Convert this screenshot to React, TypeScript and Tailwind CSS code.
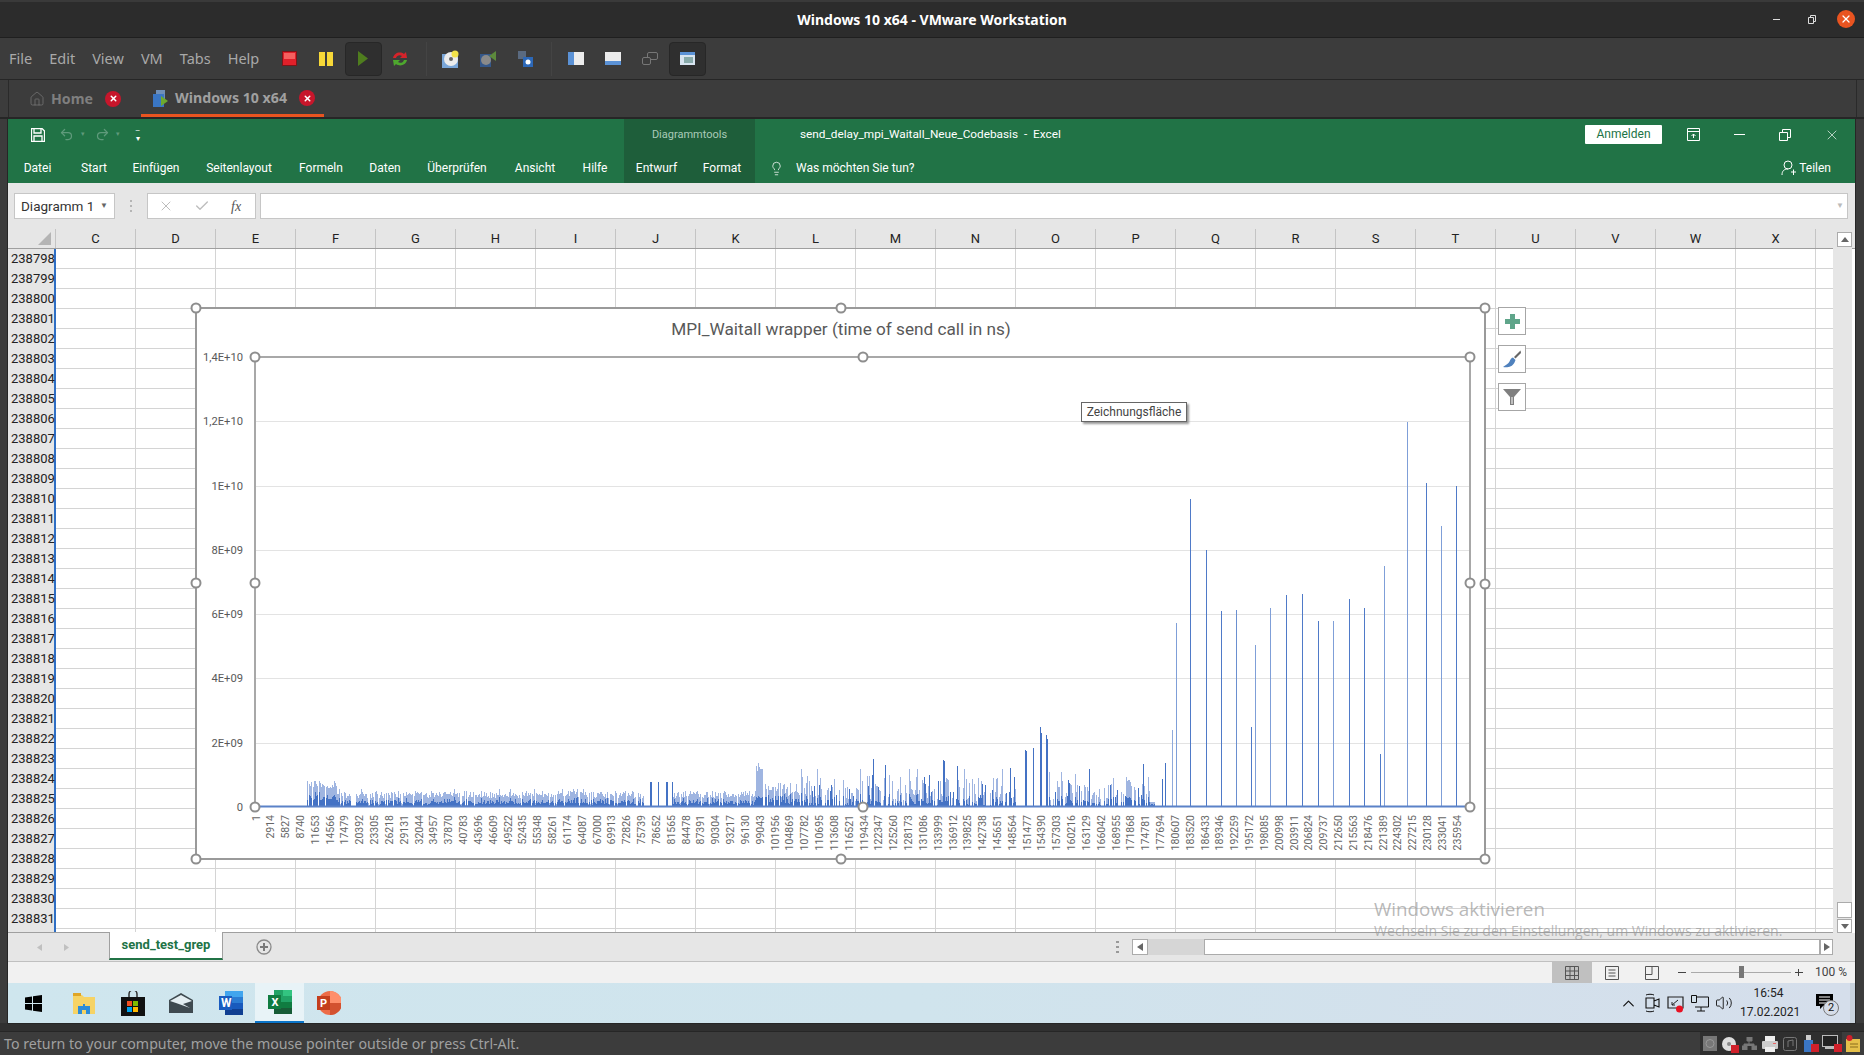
import React from "react";
import { House, Undo2, Redo2, Lightbulb, ChevronUp, Volume2, X, Check } from "lucide-react";

const COLS = "C D E F G H I J K L M N O P Q R S T U V W X".split(" ");
const ROWS = Array.from({ length: 34 }, (_, i) => 238798 + i);
const RIBBON: [string, string][] = [
  ["Datei", "w-[59px]"], ["Start", "w-[54px]"], ["Einfügen", "w-[70px]"], ["Seitenlayout", "w-[96px]"],
  ["Formeln", "w-[68px]"], ["Daten", "w-[60px]"], ["Überprüfen", "w-[84px]"], ["Ansicht", "w-[72px]"], ["Hilfe", "w-[53px] pr-[5px]"],
];

function makeBars() {
  let seed = 12345;
  const r = () => { seed = (seed * 16807) % 2147483647; return seed / 2147483647; };
  let light = ""; let dark = "";
  const add = (x: number, h: number, d: number) => {
    const X = x + 0.5;
    light += `M${X} 807V${(807 - h).toFixed(0)}`;
    if (d > 0) dark += `M${X} 807V${(807 - h * d).toFixed(0)}`;
  };
  for (let x = 307; x < 1172; x++) {
    let h = 0; let d = 0.25 + r() * 0.35;
    if (x < 337) { h = 18 + r() * 9; if (r() < 0.08) h = 0; }
    else if (x < 644) { h = 9 + r() * 7; if (r() < 0.03) h = 18; if (r() < 0.14) h = r() * 4; if (x > 350 && x < 356) h = 0; }
    else if (x < 673) { if ([650, 651, 658, 666, 667, 672].includes(x)) { h = 25; d = 1; } }
    else if (x < 756) { h = 9 + r() * 7; if (r() < 0.14) h = r() * 4; }
    else if (x < 763) { h = 36 + r() * 8; d = 0.25; }
    else if (x < 800) { h = 10 + r() * 18; if (r() < 0.22) h = 0; }
    else if (x < 1016) { h = r() < 0.35 ? 0 : 6 + r() * 26; if (r() < 0.2) d = 1; else d = 0.15 + r() * 0.3; if (r() < 0.04) h = 38; }
    else if (x < 1048) h = 0;
    else if (x < 1092) { h = r() < 0.35 ? 0 : 6 + r() * 30; d = r() < 0.2 ? 1 : 0.3; }
    else if (x < 1106) { h = r() < 0.3 ? 0 : 5 + r() * 16; d = 0.3; }
    else if (x < 1150) { h = r() < 0.35 ? 0 : 8 + r() * 22; d = r() < 0.2 ? 1 : 0.35; }
    else if (x < 1155) { h = 5; }
    if (h > 0) add(x, h, d);
  }
  ([[873, 48], [885, 42], [943, 47], [944, 46], [957, 41], [1010, 39], [1025, 57], [1026, 56], [1033, 59], [1040, 80], [1041, 74], [1046, 72], [1047, 68], [1089, 38], [1143, 43], [1165, 44], [1162, 28]] as number[][]).forEach(([x, h]) => add(x, h, 1));
  return { light, dark };
}
const BARS = makeBars();
const SPIKES: [number, number, string][] = [
  [1172, 2.4, "#8faadc"], [1176, 5.75, "#7f9fd8"], [1190, 9.6, "#4f7ac8"], [1206, 8, "#4f7ac8"], [1221, 6.1, "#4f7ac8"],
  [1236, 6.15, "#6a8fd0"], [1251, 2.5, "#4f7ac8"], [1255, 5.05, "#7f9fd8"], [1270, 6.2, "#7f9fd8"], [1286, 6.6, "#4f7ac8"],
  [1302, 6.65, "#4f7ac8"], [1318, 5.8, "#4f7ac8"], [1333, 5.8, "#7f9fd8"], [1349, 6.5, "#4f7ac8"], [1364, 6.2, "#4f7ac8"],
  [1380, 1.65, "#4f7ac8"], [1384, 7.5, "#7f9fd8"], [1407, 12, "#7f9fd8"], [1426, 10.1, "#4f7ac8"], [1441, 8.75, "#7f9fd8"], [1456, 10, "#4f7ac8"],
];
const YLAB: [string, number][] = [["1,4E+10", 357], ["1,2E+10", 421], ["1E+10", 486], ["8E+09", 550], ["6E+09", 614], ["4E+09", 678], ["2E+09", 743], ["0", 807]];
const HANDLES = [[196, 308], [841, 308], [1485, 308], [196, 583], [1485, 584], [196, 859], [841, 859], [1485, 859], [255, 357], [863, 357], [1470, 357], [255, 583], [1470, 583], [255, 807], [863, 807], [1470, 807]];

function Chart() {
  const labels = Array.from({ length: 82 }, (_, k) => 1 + 2913 * k);
  return (
    <svg viewBox="196 308 1289 551" className="absolute left-[188px] top-[79px] w-[1289px] h-[551px] overflow-visible">
      <rect x="196" y="308" width="1289" height="551" fill="#fff" stroke="#9a9a9a" strokeWidth="2" />
      <text x="841" y="335" textAnchor="middle" fontSize="17.2" fill="#595959">MPI_Waitall wrapper (time of send call in ns)</text>
      {YLAB.map(([t, y]) => (
        <g key={t}>
          {y > 357 && y < 807 && <line x1="255" x2="1470" y1={y + 0.5} y2={y + 0.5} stroke="#e3e3e3" />}
          <text x="243" y={y + 4} textAnchor="end" fontSize="11.2" fill="#595959">{t}</text>
        </g>
      ))}
      <path d={BARS.light} stroke="#9fb5e1" strokeWidth="1" shapeRendering="crispEdges" />
      <path d={BARS.dark} stroke="#4472c4" strokeWidth="1" shapeRendering="crispEdges" />
      {SPIKES.map(([x, v, c]) => (
        <line key={x} x1={x + 0.5} x2={x + 0.5} y1="807" y2={807 - v * 32.07} stroke={c} shapeRendering="crispEdges" />
      ))}
      <line x1="255" x2="1470" y1="806.5" y2="806.5" stroke="#5b82c8" strokeWidth="2" />
      <path d="M255 357H1470V807M255 357V807" fill="none" stroke="#a8a8a8" strokeWidth="2" />
      {labels.map((v, k) => (
        <text key={v} transform={`translate(${259.5 + k * 14.83} 815) rotate(-90)`} textAnchor="end" fontSize="10.5" fill="#666">{v}</text>
      ))}
      {HANDLES.map(([x, y], i) => (
        <circle key={i} cx={x} cy={y} r="4.5" fill="#fff" stroke="#8e8e8e" strokeWidth="2" />
      ))}
    </svg>
  );
}

function Sheet() {
  return (
    <div className="relative flex-1 overflow-hidden bg-white">
      <div className="flex h-[20px] bg-[#e6e6e6] border-b border-[#9f9f9f]">
        <div className="w-[48px] shrink-0 flex items-end justify-end pr-[4px] pb-[3px] border-r border-[#c4c4c4]">
          <svg width="13" height="13" viewBox="0 0 13 13"><path d="M13 0V13H0Z" fill="#b4b4b4" /></svg>
        </div>
        {COLS.map((c) => (
          <div key={c} className="w-[80px] shrink-0 text-center text-[13px] leading-[19px] text-[#222] border-r border-[#c4c4c4]">{c}</div>
        ))}
      </div>
      {ROWS.concat(238832).map((n) => (
        <div key={n} className="flex h-[20px]">
          <div className={"w-[48px] shrink-0 bg-[#e6e6e6] border-r-2 border-[#2f6fc4] text-[13px] leading-[20px] pl-[3px] text-[#222]"}>{n === 238832 ? "" : n}</div>
          {COLS.map((c) => (
            <div key={c} className="w-[80px] shrink-0 border-r border-b border-[#d4d4d4]" />
          ))}
          <div className="w-[17px] shrink-0 border-b border-[#d4d4d4]" />
        </div>
      ))}
      {/* scrollbar */}
      <div className="absolute right-[3px] top-0 bottom-0 w-[19px] bg-[#e6e6e6] flex flex-col items-end pt-[3px]">
        <div className="w-[15px] h-[15px] bg-white border border-[#ababab] flex items-center justify-center">
          <svg width="8" height="5"><path d="M4 0L8 5H0Z" fill="#666" /></svg>
        </div>
        <div className="mt-auto w-[15px] h-[16px] bg-white border border-[#ababab]" />
        <div className="w-[15px] h-[14px] mt-[1px] bg-white border border-[#ababab] flex items-center justify-center">
          <svg width="8" height="5"><path d="M0 0H8L4 5Z" fill="#666" /></svg>
        </div>
      </div>
      <div className="absolute left-0 right-[22px] bottom-0 h-[1px] bg-[#9f9f9f]" />
      <Chart />
      {/* chart buttons */}
      <div className="absolute left-[1490px] top-[78px] flex flex-col gap-[10px]">
        <div className="w-[28px] h-[28px] bg-white border border-[#a6a6a6] flex items-center justify-center">
          <svg width="15" height="15" viewBox="0 0 15 15"><path d="M5 0H10V5H15V10H10V15H5V10H0V5H5Z" fill="#5fa58a" /></svg>
        </div>
        <div className="w-[28px] h-[28px] bg-white border border-[#a6a6a6] flex items-center justify-center">
          <svg width="18" height="18" viewBox="0 0 18 18"><path d="M17.5 0.5L11 7l1.5 1.5L18 3Z" fill="#666" /><path d="M10 7.5c-2 .5-2.5 2-3.5 4C5.500 13.500 3 15 0 17c4 .5 9 .5 11.500-4.500l1-2.500Z" fill="#4f81bd" /></svg>
        </div>
        <div className="w-[28px] h-[28px] bg-white border border-[#a6a6a6] flex items-center justify-center">
          <svg width="18" height="18" viewBox="0 0 18 18"><path d="M0 1H18L11 9V17H7V9Z" fill="#7f7f7f" /><path d="M8.500 9V16H9.500V9Z" fill="#fff" /></svg>
        </div>
      </div>
      {/* tooltip */}
      <div className="absolute left-[1073px] top-[173px] h-[20px] w-[106px] bg-white border border-[#666] shadow-[2px_2px_2px_#999] text-[12px] leading-[18px] text-center text-[#444] whitespace-nowrap">Zeichnungsfläche</div>
    </div>
  );
}

function SheetTabs() {
  return (
    <div className="h-[29px] bg-[#e6e6e6] border-b border-[#c0c0c0] flex items-stretch text-[#888] relative">
      <div className="w-[101px] flex items-center pl-[27px] gap-[18px]">
        <svg width="9" height="9"><path d="M7 1L2 4.500 7 8Z" fill="#c0c0c0" /></svg>
        <svg width="9" height="9"><path d="M2 1L7 4.500 2 8Z" fill="#c0c0c0" /></svg>
      </div>
      <div className="w-[114px] h-[28px] bg-white border-x border-[#a0a0a0] border-b-2 border-b-[#217346] text-center text-[#217346] font-bold text-[13px] leading-[25px] -mt-[1px]">send_test_grep</div>
      <div className="ml-[33px] flex items-center">
        <svg width="16" height="16" viewBox="0 0 16 16"><circle cx="8" cy="8" r="7" fill="none" stroke="#8a8a8a" strokeWidth="1.300" /><path d="M8 4V12M4 8H12" stroke="#7a7a7a" strokeWidth="2" /></svg>
      </div>
      <div className="ml-auto flex items-center mr-[22px]">
        <svg width="4" height="12" className="mr-[12px]"><path d="M0 0H3V2H0ZM0 5H3V7H0ZM0 10H3V12H0Z" fill="#999" /></svg>
        <div className="w-[16px] h-[16px] bg-white border border-[#ababab] flex items-center justify-center"><svg width="6" height="8"><path d="M6 0V8L0 4Z" fill="#666" /></svg></div>
        <div className="w-[56px] h-[16px] bg-[#d6d6d6]" />
        <div className="w-[616px] h-[16px] bg-white border border-[#ababab]" />
        <div className="w-[13px] h-[16px] bg-white border border-[#ababab] flex items-center justify-center"><svg width="6" height="8"><path d="M0 0V8L6 4Z" fill="#666" /></svg></div>
      </div>
    </div>
  );
}

function StatusBar() {
  return (
    <div className="h-[21px] bg-[#f1f1f1] flex justify-end items-stretch pr-[8px] text-[#444]">
      <div className="w-[40px] bg-[#c0c0c0] flex items-center justify-center">
        <svg width="14" height="14" viewBox="0 0 14 14"><path d="M.5.5H13.500V13.500H.5ZM.5 5H13.500M.5 9.500H13.500M5 .5V13.500M9.500 .5V13.500" fill="none" stroke="#555" /></svg>
      </div>
      <div className="w-[40px] flex items-center justify-center">
        <svg width="14" height="14" viewBox="0 0 14 14"><path d="M.5.5H13.500V13.500H.5ZM3.500 4H10.500M3.500 7H10.500M3.500 10H10.500" fill="none" stroke="#555" /></svg>
      </div>
      <div className="w-[40px] flex items-center justify-center">
        <svg width="14" height="14" viewBox="0 0 14 14"><path d="M.5.5H13.500V13.500H.5ZM.5 8.500H7V.5" fill="none" stroke="#555" /></svg>
      </div>
      <div className="ml-[6px] flex items-center w-[125px] relative">
        <div className="w-[8px] h-[1px] bg-[#444]" />
        <div className="ml-[5px] mr-[4px] flex-1 h-[1px] bg-[#aaa] relative"><div className="absolute left-[48px] -top-[6px] w-[5px] h-[12px] bg-[#777]" /></div>
        <div className="w-[8px] h-[1px] bg-[#444] relative"><div className="absolute left-[3px] -top-[3px] w-[1px] h-[7px] bg-[#444]" /></div>
      </div>
      <div className="w-[44px] text-right text-[12px] leading-[21px] text-[#444]">100 %</div>
    </div>
  );
}

function Tray({ children }: { children: React.ReactNode }) {
  return <div className="w-[24px] flex items-center justify-center">{children}</div>;
}

function Taskbar() {
  const cell = "w-[49.4px] flex items-center justify-center shrink-0";
  return (
    <div className="h-[40px] flex bg-gradient-to-r from-[#cfe6ee] via-[#d0e4ed] to-[#d5deeb] border-r-[5px] border-[#c8d2dc]">
      <div className={cell + " pl-[1px]"}><svg width="17" height="17" viewBox="0 0 17 17"><path d="M0 2.500L7 1.500V8H0ZM8 1.300L17 0V8H8ZM0 9H7V15.500L0 14.500ZM8 9H17V17L8 15.700Z" fill="#000" /></svg></div>
      <div className={cell + " pl-[3px]"}><svg width="22" height="21" viewBox="0 0 22 21"><path d="M0 2H9L11 4H22V21H0Z" fill="#f6d365" /><path d="M0 0H8V3H0Z" fill="#e0a526" /><path d="M5 21V13H10V11H12V13H17V21H13V17H9V21Z" fill="#2d8cd7" /></svg></div>
      <div className={cell + " pl-[3px]"}><svg width="24" height="25" viewBox="0 0 24 25"><path d="M0 6H24V25H0Z" fill="#111" /><path d="M8 6V3a4 4 0 018 0V6" fill="none" stroke="#333" strokeWidth="1.500" /><path d="M6 10H11V15H6Z" fill="#f25022" /><path d="M12 10H17V15H12Z" fill="#7fba00" /><path d="M6 16H11V21H6Z" fill="#00a4ef" /><path d="M12 16H17V21H12Z" fill="#ffb900" /></svg></div>
      <div className={cell + " pl-[1px]"}><svg width="24" height="20" viewBox="0 0 24 20"><path d="M0 7L12 0 24 7V20H0Z" fill="#3f4a50" /><path d="M1 8L12 2 23 8 14 11 21 15 7 10Z" fill="#e4eef2" /></svg></div>
      <div className={cell + " pl-[1px]"}><svg width="24" height="24" viewBox="0 0 24 24"><path d="M6 0H24V24H6Z" fill="#2b7cd3" /><path d="M6 0H24V6H6Z" fill="#41a5ee" /><path d="M6 12H24V18H6Z" fill="#185abd" /><path d="M6 18H24V24H6Z" fill="#103f91" /><path d="M0 5H13V19H0Z" fill="#1a5cc0" /><text x="2" y="16" fontSize="12" fontWeight="700" fill="#fff">W</text></svg></div>
      <div className={cell + " bg-[#e8f3f7] border-b-2 border-[#0a74c8]"}><svg width="24" height="24" viewBox="0 0 24 24"><path d="M6 0H24V24H6Z" fill="#21a366" /><path d="M15 0H24V6H15Z" fill="#33c481" /><path d="M6 0H15V12H6Z" fill="#21a366" /><path d="M6 12H15V18H6Z" fill="#107c41" /><path d="M15 12H24V18H15Z" fill="#107c41" /><path d="M6 18H24V24H6Z" fill="#185c37" /><path d="M0 5H13V19H0Z" fill="#107c41" /><text x="3.500" y="16" fontSize="11" fontWeight="700" fill="#fff">X</text></svg></div>
      <div className={cell}><svg width="24" height="24" viewBox="0 0 24 24"><circle cx="13" cy="12" r="12" fill="#ed6c47" /><path d="M13 0a12 12 0 0112 12H13Z" fill="#ff8f6b" /><path d="M13 12H25A12 12 0 0113 24Z" fill="#d35230" /><path d="M0 5H13V19H0Z" fill="#c43e1c" /><text x="3" y="16" fontSize="11" fontWeight="700" fill="#fff">P</text></svg></div>
      <div className="ml-auto flex items-center text-[#111] pr-[17px]">
        <Tray><ChevronUp size={19} strokeWidth={1.5} /></Tray>
        <Tray><svg width="16" height="20" viewBox="0 0 16 20"><path d="M2 5H10V15H2Z M10 8L15 6V14L10 12" fill="none" stroke="#111" strokeWidth="1.100" /><path d="M2 2C4 1 8 1 10 2M2 18C4 19 8 19 10 18" fill="none" stroke="#111" /></svg></Tray>
        <Tray><svg width="18" height="19" viewBox="0 0 18 19"><path d="M1 3H16V14H1Z" fill="none" stroke="#222" strokeWidth="1.200" /><path d="M5 11L11 6M5 8V11H8" fill="none" stroke="#222" /><circle cx="12.500" cy="15" r="3.500" fill="#e81123" /></svg></Tray>
        <Tray><svg width="18" height="17" viewBox="0 0 18 17"><path d="M4 2H17.500V12H4M10 12V16M6 16H14" fill="none" stroke="#111" /><path d="M.5.5H5.500V7.500H.5Z" fill="#d2e0ea" stroke="#111" /></svg></Tray>
        <Tray><Volume2 size={18} strokeWidth={1.2} /></Tray>
        <div className="ml-[4px] w-[57px] text-center text-[12px] leading-[19px] text-[#222]">16:54<br />17.02.2021</div>
        <div className="relative ml-[19px] w-[17px] h-[19px]">
          <svg width="17" height="15" viewBox="0 0 17 15"><path d="M0 0H17V12H7L4 15V12H0Z" fill="#000" /><path d="M3 3H14M3 6H14M3 9H10" stroke="#fff" /></svg>
          <div className="absolute left-[7px] top-[6px] w-[16px] h-[16px] rounded-full bg-[#d6dde8] border border-[#777] text-[11px] leading-[14px] text-center">2</div>
        </div>
      </div>
    </div>
  );
}

function ToolBtn({ active, children }: { active?: boolean; children: React.ReactNode }) {
  return <div className={"w-[37px] h-[34px] flex items-center justify-center rounded-[4px] shrink-0 " + (active ? "bg-[#2f2f2f] border border-[#272727]" : "")}>{children}</div>;
}

function Toolbar() {
  return (
    <div className="h-[42px] bg-[#3c3c3c] border-b border-[#262626] flex items-center text-[#a9a9a9] text-[14.500px] font-['Noto_Sans',sans-serif]">
      <div className="flex w-[270.500px] pl-[9px] gap-[17px]">
        {["File", "Edit", "View", "VM", "Tabs", "Help"].map((m) => <span key={m}>{m}</span>)}
      </div>
      <ToolBtn><svg width="15" height="15"><rect x=".5" y=".5" width="14" height="14" fill="#e0202a" stroke="#7c1418" /><rect x="2" y="2" width="11" height="6" fill="#f5605f" /></svg></ToolBtn>
      <ToolBtn><svg width="14" height="14"><rect width="6" height="14" fill="#f7d838" /><rect x="8" width="6" height="14" fill="#f7d838" /></svg></ToolBtn>
      <ToolBtn active><svg width="10" height="15"><path d="M0 0L10 7.500 0 15Z" fill="#4f7d1e" /></svg></ToolBtn>
      <ToolBtn><svg width="16" height="16" viewBox="0 0 16 16"><path d="M1 7C2 2 8 0 12 3L14 1 15 7H8L10 5C8 3.500 5 4 4 7Z" fill="#d5232a" /><path d="M15 9C14 14 8 16 4 13L2 15 1 9H8L6 11C8 12.500 11 12 12 9Z" fill="#4ea82e" /></svg></ToolBtn>
      <div className="w-[1px] h-[34px] bg-[#444] ml-[7px] mr-[6px]" />
      <ToolBtn><svg width="18" height="18" viewBox="0 0 18 18"><rect x="0" y="4" width="16" height="14" fill="#7aa6d8" /><circle cx="9" cy="9" r="7" fill="#ececec" /><circle cx="9" cy="9" r="2" fill="#666" /><circle cx="13" cy="4" r="3.500" fill="#f3e34a" /></svg></ToolBtn>
      <ToolBtn><svg width="16" height="16" viewBox="0 0 16 16"><rect x="0" y="3" width="11" height="13" fill="#35588a" /><circle cx="6" cy="9" r="5" fill="#8a8a8a" /><path d="M16 0V10L9 5Z" fill="#5d8a3c" /></svg></ToolBtn>
      <ToolBtn><svg width="15" height="16" viewBox="0 0 15 16"><rect x="0" y="0" width="8" height="8" fill="#5a6a80" /><rect x="5" y="6" width="10" height="10" fill="#2c68b8" /><circle cx="10" cy="11" r="2.500" fill="#fff" /></svg></ToolBtn>
      <div className="w-[1px] h-[34px] bg-[#444] ml-[7px] mr-[6px]" />
      <ToolBtn><svg width="16" height="13"><rect width="16" height="13" fill="#ececec" /><rect width="6" height="13" fill="#5b92d6" /></svg></ToolBtn>
      <ToolBtn><svg width="16" height="13"><rect width="16" height="13" fill="#ececec" /><rect y="9" width="16" height="4" fill="#5b92d6" /></svg></ToolBtn>
      <ToolBtn><svg width="16" height="13" viewBox="0 0 16 13"><rect x="5.500" y=".5" width="10" height="7" rx="1.500" fill="none" stroke="#777" /><rect x=".5" y="5.500" width="8" height="7" rx="1.500" fill="#3c3c3c" stroke="#777" /></svg></ToolBtn>
      <ToolBtn active><svg width="15" height="13"><rect width="15" height="13" fill="#d8e4f0" /><rect width="15" height="3" fill="#5b92d6" /><rect x="4" y="5" width="9" height="6" fill="#8aa" /></svg></ToolBtn>
    </div>
  );
}

function Excel() {
  return (
    <div className="h-[904px] ml-[8px] w-[1847px] flex flex-col font-['Roboto',sans-serif] relative shadow-[0_0_0_1px_#262626]">
      <div className="h-[64px] bg-[#217346] text-white text-[12px] relative shrink-0">
        <div className="h-[34px] flex items-center pb-[3px]">
          <div className="w-[616px] flex items-center pl-[23px] text-[#5f9a7b]">
            <svg width="14" height="14" viewBox="0 0 14 14"><path d="M.5.5H11L13.500 3V13.500H.5ZM3 .5V5H10V.5M3 13.500V8H11V13.500" fill="none" stroke="#fff" strokeWidth="1.300" /></svg>
            <Undo2 size={15} className="ml-[14px]" /><span className="text-[7px] ml-[7px]">▾</span>
            <Redo2 size={15} className="ml-[10px]" /><span className="text-[7px] ml-[6px]">▾</span>
            <span className="ml-[15px] text-white text-[8px] leading-[8px] text-center">–<br />▾</span>
          </div>
          <div className="w-[131px] h-[34px] -mb-[3px] bg-[#1e5e3a] text-center text-[11px] leading-[31px] text-[#a9cbb8]">Diagrammtools</div>
          <div className="ml-[45px] text-[11.800px] whitespace-pre">send_delay_mpi_Waitall_Neue_Codebasis  -  Excel</div>
          <div className="ml-auto flex items-center">
            <div className="w-[77px] h-[19px] bg-white rounded-[1px] text-[#217346] text-center leading-[19px]">Anmelden</div>
            <svg width="13" height="13" viewBox="0 0 13 13" className="ml-[25px]"><path d="M.5.5H12.500V12.500H.5ZM.5 3.500H12.500M6.500 10V6M4.500 8L6.500 6 8.500 8" fill="none" stroke="#fff" /></svg>
            <div className="ml-[34px] w-[11px] h-[1px] bg-white" />
            <svg width="12" height="12" viewBox="0 0 12 12" className="ml-[34px]"><path d="M.5 3.500H8.500V11.500H.5ZM3.500 3.500V.5H11.500V8.500H8.500" fill="none" stroke="#fff" /></svg>
            <X size={16} strokeWidth={1} className="ml-[33px] mr-[15px]" />
          </div>
        </div>
        <div className="h-[30px] flex items-center">
          {RIBBON.map(([t, w]) => <div key={t} className={w + " text-center"}>{t}</div>)}
          <div className="flex h-full bg-[#1e5e3a]">
            <div className="w-[65px] text-center leading-[30px]">Entwurf</div>
            <div className="w-[66px] text-center leading-[30px]">Format</div>
          </div>
          <Lightbulb size={15} strokeWidth={1.2} className="ml-[14px]" />
          <span className="ml-[12px]">Was möchten Sie tun?</span>
          <div className="ml-auto flex items-center mr-[24px]">
            <svg width="15" height="16" viewBox="0 0 15 16"><circle cx="7" cy="5" r="4" fill="none" stroke="#fff" /><path d="M1 15C1 11 3 9 7 9M10 12H15M12.500 9.500V15" fill="none" stroke="#fff" /></svg>
            <span className="ml-[3px]">Teilen</span>
          </div>
        </div>
      </div>
      <div className="h-[46px] bg-[#e6e6e6] flex items-center shrink-0 pl-[6px] pr-[7px]">
        <div className="w-[101px] h-[26px] bg-white border border-[#c6c6c6] text-[13.500px] leading-[24px] pl-[6px] text-[#333] flex justify-between pr-[6px]">Diagramm 1<span className="text-[8px] text-[#666]">▼</span></div>
        <svg width="4" height="12" className="mx-[14px]"><path d="M1 0H3V2H1ZM1 5H3V7H1ZM1 10H3V12H1Z" fill="#b5b5b5" /></svg>
        <div className="w-[109px] h-[26px] bg-white border border-[#c6c6c6] flex items-center text-[#bdbdbd]">
          <X size={16} strokeWidth={1.5} className="ml-[10px]" /><Check size={16} strokeWidth={2} className="ml-[20px]" />
          <span className="font-['Liberation_Serif',serif] italic text-[14px] text-[#555] ml-[21px]">fx</span>
        </div>
        <div className="ml-[4px] flex-1 h-[26px] bg-white border border-[#c6c6c6] flex items-center justify-end pr-[3px]"><span className="text-[8px] text-[#bbb]">▼</span></div>
      </div>
      <div className="flex-1 flex flex-col min-h-0 bg-[#e6e6e6]">
        <Sheet />
        <SheetTabs />
        <StatusBar />
        <Taskbar />
      </div>
      <div className="absolute left-[1366px] top-[776px] text-[18.800px] leading-[28px] text-[#9a9a9a]/70 font-['Open_Sans',sans-serif]">Windows aktivieren</div>
      <div className="absolute left-[1366px] top-[802px] text-[14.070px] leading-[20px] text-[#9a9a9a]/70 font-['Open_Sans',sans-serif] whitespace-nowrap">Wechseln Sie zu den Einstellungen, um Windows zu aktivieren.</div>
    </div>
  );
}

function StatusStrip() {
  const box = "flex items-center justify-center shrink-0";
  return (
    <div className="ml-auto h-[23px] w-[164px] flex items-center">
      <div className="h-full w-[142px] bg-[#2f2f2f] flex items-center">
        <div className={box + " w-[20px]"}><svg width="14" height="15"><rect width="14" height="15" fill="#777" /><circle cx="7" cy="7.500" r="4" fill="none" stroke="#999" /></svg></div>
        <div className={box + " w-[20px]"}><svg width="18" height="18"><circle cx="8" cy="9" r="7" fill="#ddd" /><circle cx="8" cy="9" r="2" fill="#888" /><rect x="10" y="10" width="8" height="8" fill="#d0202a" /></svg></div>
        <div className={box + " w-[19px]"}><svg width="15" height="13" viewBox="0 0 15 13"><path d="M5 0H10V4H5ZM0 9H5V13H0ZM10 9H15V13H10ZM7 4V7M2 9V7H12V9" fill="#777" stroke="#777" /></svg></div>
        <div className={box + " w-[21px]"}><svg width="16" height="16"><rect y="5" width="16" height="8" rx="1" fill="#ccc" /><rect x="3" width="10" height="5" fill="#eee" /><rect x="3" y="11" width="10" height="5" fill="#eee" /><rect x="11" y="7" width="3" height="1" fill="#e66" /></svg></div>
        <div className={box + " w-[20px]"}><svg width="14" height="14"><rect x=".5" y=".5" width="13" height="13" rx="2" fill="none" stroke="#777" /><path d="M5 10V4L10 3V9" fill="none" stroke="#777" /></svg></div>
        <div className={box + " w-[21px]"}><svg width="16" height="17"><rect x="3" width="5" height="5" fill="#ccc" /><rect x="1" y="5" width="9" height="12" fill="#3a76c4" /><rect x="8" y="9" width="8" height="8" fill="#d0202a" /></svg></div>
        <div className={box + " w-[21px]"}><svg width="20" height="17"><rect x=".5" y=".5" width="15" height="11" fill="#222" stroke="#bbb" /><rect x="3" y="12" width="10" height="2" fill="#bbb" /><rect x="12" y="9" width="8" height="8" fill="#d0202a" /></svg></div>
      </div>
      <div className={box + " w-[22px]"}><svg width="14" height="17"><rect y="4" width="14" height="13" fill="#e5c04a" /><circle cx="3.500" cy="3" r="3" fill="#d0202a" /><path d="M4 9H12M4 12H12" stroke="#8a6d1d" /></svg></div>
    </div>
  );
}

export default function App() {
  return (
    <div className="w-[1864px] h-[1055px] flex flex-col overflow-hidden bg-[#3c3c3c] font-['Noto_Sans',sans-serif]">
      <div className="h-[38px] shrink-0 bg-[#2c2c2c] border-t-2 border-t-[#3a3a3a] border-b border-[#1f1f1f] flex items-center relative text-[#dcdcdc]">
        <div className="flex-1 text-center font-bold text-[14px] text-white">Windows 10 x64 - VMware Workstation</div>
        <div className="absolute right-[9px] top-[8px] flex items-center">
          <div className="w-[7px] h-[1px] bg-[#ddd] mr-[28px]" />
          <svg width="8" height="9" viewBox="0 0 8 9" className="mr-[21px]"><path d="M.5 2.500H5.500V8.500H.5ZM2.500 2.500V.5H7.500V6.500H5.500" fill="none" stroke="#ddd" /></svg>
          <div className="w-[18px] h-[18px] rounded-full bg-[#e95420] flex items-center justify-center"><X size={12} strokeWidth={2.500} color="#fff" /></div>
        </div>
      </div>
      <Toolbar />
      <div className="h-[37px] shrink-0 ml-[8px] mr-[7px] bg-[#3c3c3c] border-l border-r border-[#2a2a2a] flex items-stretch text-[14.200px] font-bold">
        <div className="flex items-center w-[132px] pl-[20px] text-[#7f7f7f]">
          <House size={16} strokeWidth={1} />
          <span className="ml-[6px]">Home</span>
          <div className="ml-[12px] w-[16px] h-[16px] rounded-full bg-[#c7162b] flex items-center justify-center"><X size={9} strokeWidth={4} color="#fff" /></div>
        </div>
        <div className="flex items-center w-[183px] pl-[12px] text-[#a0a0a0] border-b-[3px] border-[#e95420]">
          <svg width="16" height="17" viewBox="0 0 16 17" className="mt-[2px]"><rect x="3" width="9" height="9" fill="#6f8fb8" /><rect y="4" width="11" height="13" fill="#3a76c4" /><path d="M8 6L15 11 8 16Z" fill="#6eaa2e" /></svg>
          <span className="ml-[6px] whitespace-nowrap mt-[2px]">Windows 10 x64</span>
          <div className="ml-[12px] w-[16px] h-[16px] rounded-full bg-[#c7162b] flex items-center justify-center mt-[2px]"><X size={9} strokeWidth={4} color="#fff" /></div>
        </div>
      </div>
      <div className="h-[2px] shrink-0 bg-[#262626]" />
      <Excel />
      <div className="h-[9px] shrink-0 bg-[#303030] border-b border-[#262626]" />
      <div className="h-[23px] shrink-0 flex items-center bg-[#3c3c3c] pl-[4px] text-[#a0a0a0] text-[14.200px]">
        <span>To return to your computer, move the mouse pointer outside or press Ctrl-Alt.</span>
        <StatusStrip />
      </div>
    </div>
  );
}
